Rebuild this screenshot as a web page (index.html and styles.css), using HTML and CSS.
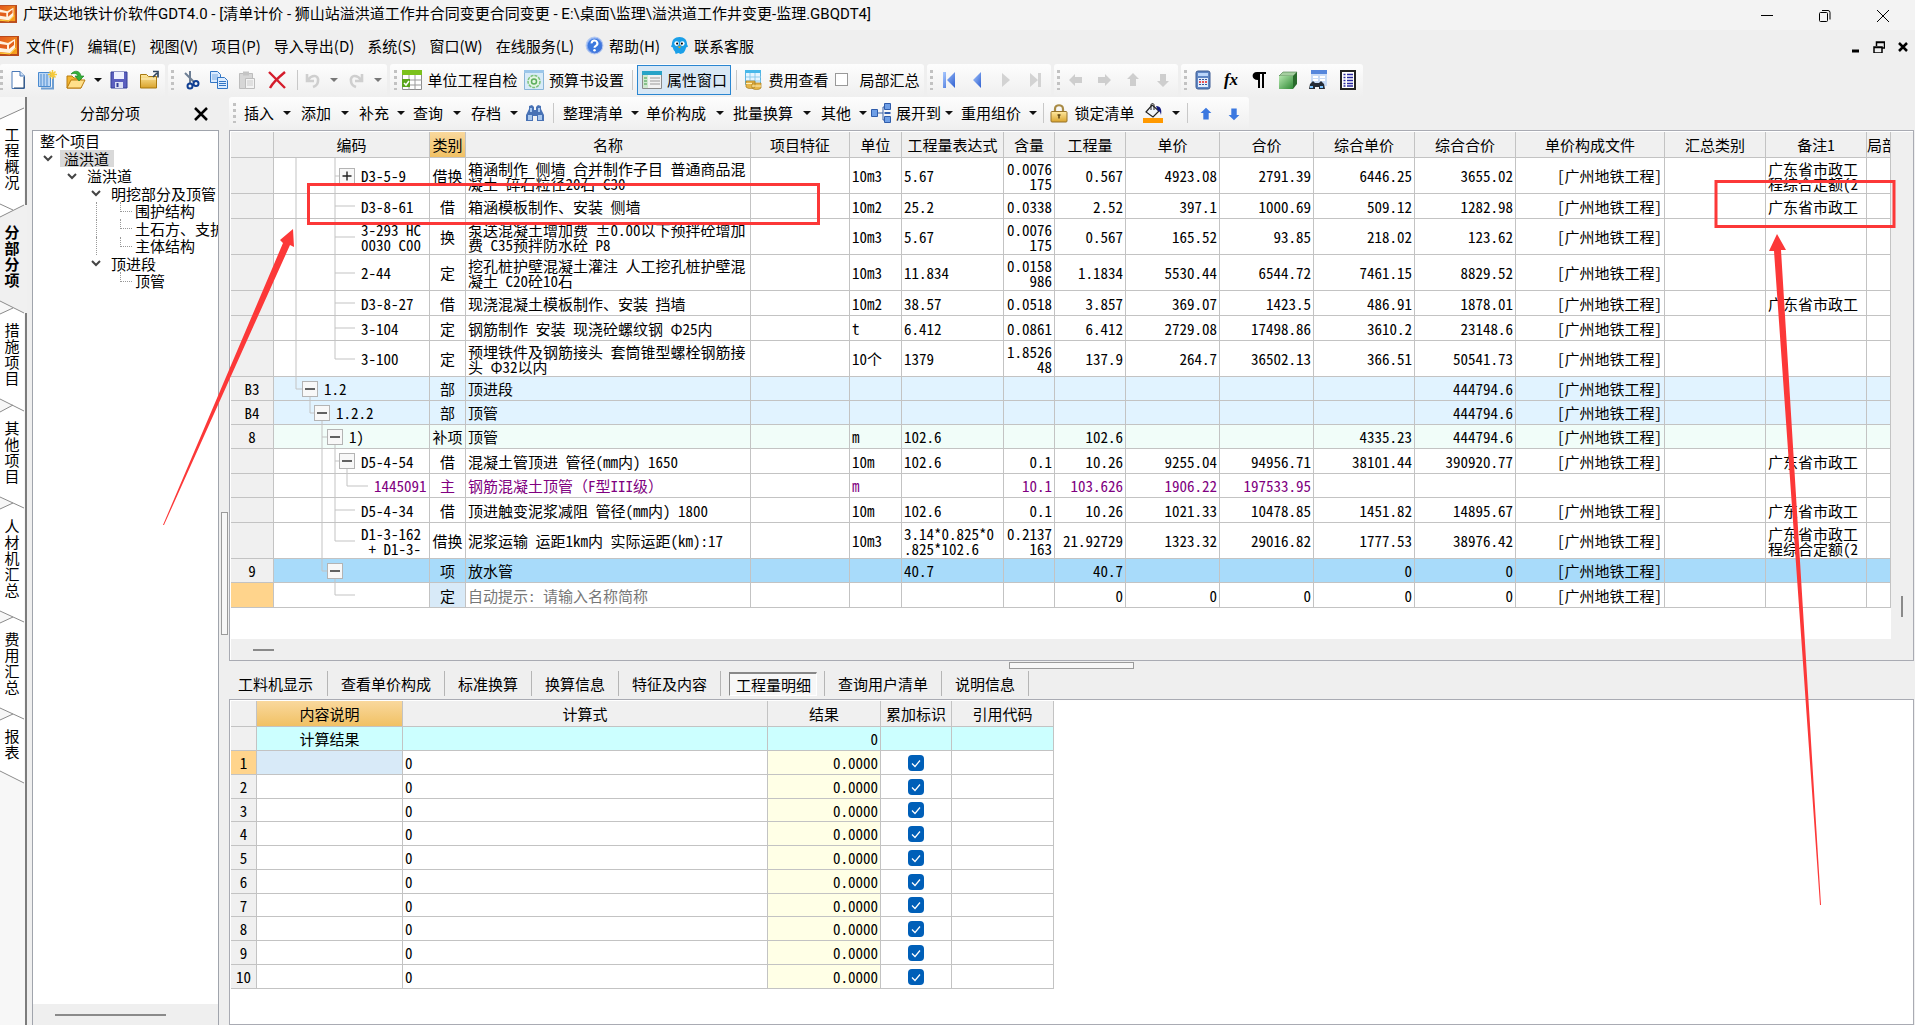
FILE: index.html
```html
<!DOCTYPE html>
<html lang="zh-CN">
<head>
<meta charset="utf-8">
<title>广联达地铁计价软件GDT4.0</title>
<link rel="stylesheet" href="styles.css">
</head>
<body>
<svg class="defs" aria-hidden="true">
  <defs>
    <linearGradient id="g-blue" x1="0" y1="0" x2="1" y2="1"><stop offset="0" stop-color="#a9c9ff"/><stop offset="1" stop-color="#2e5fd0"/></linearGradient>
    <linearGradient id="g-gold" x1="0" y1="0" x2="0" y2="1"><stop offset="0" stop-color="#ffe9a0"/><stop offset="1" stop-color="#d9a32c"/></linearGradient>
    <linearGradient id="g-green" x1="0" y1="0" x2="1" y2="1"><stop offset="0" stop-color="#b4e6ae"/><stop offset="1" stop-color="#2f8a35"/></linearGradient>
    <linearGradient id="g-app" x1="0" y1="0" x2="1" y2="1"><stop offset="0" stop-color="#e2571c"/><stop offset="1" stop-color="#f8a51e"/></linearGradient>
  </defs>
  <symbol id="i-app" viewBox="0 0 19 20"><rect x="0" y="0" width="19" height="20" fill="#b8481a"/><rect x="0" y="1" width="17" height="17" fill="url(#g-app)"/><path d="M0 5l8 2 7-4v9l-5 5-10-1z" fill="#fff3e0"/><path d="M0 8l7 1v4l-7-1zM9 9l5-4v4l-5 4z" fill="#e2601c"/><path d="M0 17l10 1 6-6" stroke="#ffd43b" fill="none"/></symbol>
  <symbol id="i-help" viewBox="0 0 18 18"><circle cx="9" cy="9" r="8" fill="url(#g-blue)" stroke="#b9cdf0"/><circle cx="9" cy="9" r="6.500" fill="#3b78de"/><path d="M6.300 7a2.700 2.700 0 1 1 4 2.300C9.300 9.900 9 10.200 9 11.200" stroke="#fff" stroke-width="2" fill="none"/><circle cx="9" cy="13.500" r="1.200" fill="#fff"/></symbol>
  <symbol id="i-qq" viewBox="0 0 20 20"><path d="M2 9C2 4 5 1 10 1s8 3 8 8l1 2-2 1c-1 4-3 6-3 6l-3 1-2-1-3 1-1-3c-1-1-2-3-2-4l-2-1z" fill="#1a9fe8"/><circle cx="7" cy="8" r="2.400" fill="#fff"/><circle cx="13" cy="8" r="2.400" fill="#fff"/><circle cx="7.500" cy="8" r="1.100"/><circle cx="12.500" cy="8" r="1.100"/><path d="M8 11h4l-2 2z" fill="#f59f00"/></symbol>
  <symbol id="i-new" viewBox="0 0 20 20"><path d="M4 1.500h8l4.500 4.500v12.500H4z" fill="#fff" stroke="#4a7ab8"/><path d="M12 1.500V6h4.500" fill="#cfe0f6" stroke="#4a7ab8"/><path d="M16 7v11H6" stroke="#23456f" fill="none"/></symbol>
  <symbol id="i-newp" viewBox="0 0 20 20"><path d="M1.500 2.500h12v14h-12z" fill="#bcd7f5" stroke="#4a8bd0"/><path d="M4 4v12M7 4v12M10 4v12" stroke="#4a8bd0"/><path d="M4 18.500h12V6" stroke="#6d9dd1" stroke-width="2" fill="none"/><path d="M15.500 0v9M11 4.500h9M12.500 1.500l6 6M18.500 1.500l-6 6" stroke="#f5c93a" stroke-width="1.500"/></symbol>
  <symbol id="i-open" viewBox="0 0 20 20"><path d="M1 18V6h5l2 2h7v10z" fill="#f2b632" stroke="#b97a0c"/><path d="M1 18l4-8h14l-4 8z" fill="#ffe08a" stroke="#b97a0c"/><path d="M5 4c3-4 9-4 10 2h3l-5 5-4-5h3c-1-3-4-3-7-2z" fill="#35b13a" stroke="#167a1b" stroke-width=".6"/></symbol>
  <symbol id="i-save" viewBox="0 0 20 20"><path d="M2 2h16v16H2z" fill="#5a5fbe" stroke="#333e98"/><path d="M5 2h10v7H5z" fill="#eef1ff"/><path d="M6 12h8v6H6z" fill="#dbe0f5"/><path d="M7.500 13h2v4h-2z" fill="#333e98"/></symbol>
  <symbol id="i-folder" viewBox="0 0 20 20"><path d="M1.500 18V4.500h6l2 2h8V18z" fill="url(#g-gold)" stroke="#a8780f"/><path d="M2 9h15" stroke="#fff0c0"/><path d="M14 7l4-4M14 1.500h5v6" stroke="#33475f" stroke-width="1.700" fill="none"/></symbol>
  <symbol id="i-cut" viewBox="0 0 20 20"><path d="M4 3l9 9M9 1l0 12" stroke="#6e7f95" stroke-width="2" fill="none"/><circle cx="9" cy="16" r="2.500" fill="none" stroke="#103f93" stroke-width="2"/><circle cx="15" cy="13.500" r="2.500" fill="none" stroke="#103f93" stroke-width="2"/></symbol>
  <symbol id="i-copy" viewBox="0 0 20 20"><path d="M1.500 1.500h7l3 3v8h-10z" fill="#dcecff" stroke="#3376c4"/><path d="M3 5h6M3 7h6M3 9h6" stroke="#7aaae0"/><path d="M8.500 7.500h7l3 3v8h-10z" fill="#dcecff" stroke="#3376c4"/><path d="M10 11.500h7M10 13.500h7M10 15.500h7" stroke="#3376c4"/></symbol>
  <symbol id="i-paste" viewBox="0 0 20 20"><path d="M2.500 3.500h13v15h-13z" fill="#d6d6d6" stroke="#bdbdbd"/><path d="M6 1.500h6v4H6z" fill="#c4c4c4"/><path d="M8.500 8.500h9v10h-9z" fill="#f3f3f3" stroke="#bdbdbd"/><path d="M10 11h6M10 13h6M10 15h6" stroke="#ccc"/></symbol>
  <symbol id="i-del" viewBox="0 0 20 20"><path d="M2 2l16 16M18 2C12 7 6 12 3 18" stroke="#d41c2c" stroke-width="2.400" fill="none"/></symbol>
  <symbol id="i-undo" viewBox="0 0 20 20"><path d="M4 4v7h7" stroke="#cfcfcf" stroke-width="2.600" fill="none"/><path d="M5 10c4-6 11-5 10 1 0 3-2 5-5 6" stroke="#cfcfcf" stroke-width="2.600" fill="none"/></symbol>
  <symbol id="i-redo" viewBox="0 0 20 20"><path d="M16 4v7H9" stroke="#cfcfcf" stroke-width="2.600" fill="none"/><path d="M15 10C11 4 4 5 5 11c0 3 2 5 5 6" stroke="#cfcfcf" stroke-width="2.600" fill="none"/></symbol>
  <symbol id="i-check" viewBox="0 0 20 20"><path d="M.5.500h19v19H.5z" fill="#fff" stroke="#8d8d8d"/><path d="M0 0h20v5H0z" fill="#7bc11c"/><path d="M7 5v15M13 5v15M0 10h20M0 15h20" stroke="#9b9b9b"/><path d="M0 9h8v8H0z" fill="#5aa51b"/><path d="M2 13l2 2 3-4" stroke="#fff" stroke-width="1.500" fill="none"/></symbol>
  <symbol id="i-gear" viewBox="0 0 20 20"><path d="M.5.500h19v19H.5z" fill="#d8ebf8" stroke="#8ab5d8"/><path d="M0 0h20v3H0z" fill="#9cc7ea"/><circle cx="10" cy="11.500" r="6" fill="#e4f5e4" stroke="#7cc27c" stroke-width="1.500" stroke-dasharray="3 1"/><circle cx="10" cy="11.500" r="2.500" fill="none" stroke="#5cae5c" stroke-width="1.500"/></symbol>
  <symbol id="i-props" viewBox="0 0 20 20"><path d="M.5 1.500h19v17H.5z" fill="#f2f2f2" stroke="#8a8a8a"/><path d="M0 1h20v4H0z" fill="#27a3c7"/><path d="M1 5h5v13H1z" fill="#cfe8cf"/><path d="M2 8h3M2 11h3M2 14h3" stroke="#3f9b46"/><path d="M8 8h10M8 11h10M8 14h10" stroke="#9a9a9a"/></symbol>
  <symbol id="i-fee" viewBox="0 0 20 20"><path d="M2.500.500h15v14h-15z" fill="#e6f5ff" stroke="#5db4e0"/><path d="M2 0h16v3H2z" fill="#48b8ea"/><path d="M7 3v12M12 3v12M3 7h15M3 11h15" stroke="#8ccbec"/><path d="M3 11h9v6c-2 2-7 2-9 0zM9 13h9v5c-2 2-7 2-9 0z" fill="#e6b64a" stroke="#a67c1e" stroke-width=".7"/><path d="M3 13.500h6M9 16h9" stroke="#fff0b8"/></symbol>
  <symbol id="i-prev" viewBox="0 0 20 20"><path d="M14 2v16L6 10z" fill="url(#g-blue)"/></symbol>
  <symbol id="i-first" viewBox="0 0 20 20"><path d="M16 2v16L8 10zM4 2h3v16H4z" fill="url(#g-blue)"/></symbol>
  <symbol id="i-next" viewBox="0 0 20 20"><path d="M6 3v14l8-7z" fill="#d3d3d3"/></symbol>
  <symbol id="i-last" viewBox="0 0 20 20"><path d="M4 3v14l8-7zM12 3h3v14h-3z" fill="#d3d3d3"/></symbol>
  <symbol id="i-arr" viewBox="0 0 20 20"><path d="M10 3l6 6h-3v7H7V9H4z"/></symbol>
  <symbol id="i-calc" viewBox="0 0 20 20"><rect x="3" y="1" width="14" height="18" rx="2" fill="#5f86c4" stroke="#3f5d93"/><path d="M5 3h10v3H5z" fill="#bcd6fa"/><path d="M5 8h10v9H5z" fill="#e4eefc"/><path d="M6 9h2v1H6zM9 9h2v1H9zM12 9h2v1h-2zM6 14h2v1H6zM9 14h2v1H9zM12 14h2v1h-2z" fill="#35569a"/><path d="M6 11h2v2H6zM9 11h2v2H9zM12 11h2v2h-2z" fill="#e55"/></symbol>
  <symbol id="i-para" viewBox="0 0 20 20"><path d="M8 2h9v2h-2v14h-2V4h-2v14H9v-8C2 10 2 2 8 2z"/></symbol>
  <symbol id="i-cube" viewBox="0 0 20 20"><path d="M1 6l4-4h14l-3 4z" fill="#a5cfa0" stroke="#437a43" stroke-width=".6"/><path d="M1 6h14v13H1z" fill="url(#g-green)"/><path d="M15 6l4-4v12l-4 5z" fill="#296b2c"/></symbol>
  <symbol id="i-find" viewBox="0 0 20 20"><path d="M3 0h16v16H3z" fill="#c9dcf6"/><path d="M3 0h16v4H3z" fill="#5587dc"/><path d="M5 6h5v2H5zM12 6h5v2h-5zM5 9h5v2H5zM12 9h5v2h-5z" fill="#fff"/><path d="M1 19l1-5 3-3 2 2h4l2-2 3 3 1 5h-6v-2H7v2z" fill="#252c36"/><path d="M2 16h3v2H2zM12 16h3v2h-3z" fill="#7bc4ff"/></symbol>
  <symbol id="i-list" viewBox="0 0 20 20"><path d="M3 1h14v18H3z" fill="#fff" stroke="#222" stroke-width="2"/><path d="M5.500 4.500h2M5.500 7.500h2M5.500 10.500h2M5.500 13.500h2M5.500 16h2M9 4.500h6M9 7.500h6M9 10.500h6M9 13.500h6M9 16h6" stroke="#2a2aa0" stroke-width="1.600"/></symbol>
  <symbol id="i-bino" viewBox="0 0 20 20"><path d="M1 18V12l3-6V3l3-1 2 2v3h2V4l2-2 3 1v3l3 6v6h-7v-5H8v5z" fill="#4872b5"/><path d="M3 12h4v5H3zM13 12h4v5h-4zM5 5h2v4H5zM13 5h2v4h-2z" fill="#a9c8ee"/></symbol>
  <symbol id="i-tree" viewBox="0 0 20 20"><path d="M7 10h5M12 4v13M12 4h2M12 17h2" stroke="#3a62a8" fill="none"/><path d="M.5 6.500h6v7h-6zM13.500.500h6v6h-6zM13.500 13.500h6v6h-6z" fill="#6f9fe6" stroke="#2f5cab"/><path d="M13.500 9h6v2h-6z" fill="#2f5cab"/></symbol>
  <symbol id="i-lock" viewBox="0 0 20 20"><path d="M6 9V6c0-5 8-5 8 0v3" fill="none" stroke="#a98b45" stroke-width="2.200"/><rect x="2" y="8.500" width="16" height="10.500" rx="1" fill="url(#g-gold)" stroke="#96722a"/><path d="M10 11.500v4M8.500 12h3" stroke="#5b4312" stroke-width="1.500"/></symbol>
  <symbol id="i-fill" viewBox="0 0 20 20"><path d="M0 15h20v5H0z" fill="#ff9900"/><path d="M9 2l7 6-6 6-7-5z" fill="#f1f5fa" stroke="#222" stroke-width="1.200"/><path d="M8 7V2c0-2 3-2 3 0v5" fill="none" stroke="#222"/><path d="M13 3c5 0 6 4 5 9-1-4-2-4-3-4z" fill="#141c80"/></symbol>
  <symbol id="i-chev" viewBox="0 0 10 8"><path d="M1 2l4 4 4-4" fill="none" stroke="#444" stroke-width="2"/></symbol>
  <symbol id="b-minus" viewBox="0 0 16 16"><rect x=".5" y=".5" width="15" height="15" fill="#f8f8f8" stroke="#b4b4b4"/><path d="M3 8h10" stroke="#222" stroke-width="1.400"/></symbol>
  <symbol id="b-plus" viewBox="0 0 16 16"><rect x=".5" y=".5" width="15" height="15" fill="#f8f8f8" stroke="#b4b4b4"/><path d="M3.500 8h9M8 3.500v9" stroke="#222" stroke-width="1.400"/></symbol>
</svg>

<header class="titlebar">
  <svg class="app"><use href="#i-app"/></svg>
  <h1>广联达地铁计价软件GDT4.0 - [清单计价 - 狮山站溢洪道工作井合同变更合同变更 - E:\桌面\监理\溢洪道工作井变更-监理.GBQDT4]</h1>
  <div class="winbtns">
    <button aria-label="最小化"><svg viewBox="0 0 14 14"><path d="M1 6.500h12" stroke="#000"/></svg></button>
    <button aria-label="还原"><svg viewBox="0 0 14 14"><path d="M1.500 4.500q0-1 1-1h6q1 0 1 1v7q0 1-1 1h-6q-1 0-1-1zM4 1.500h6q2 0 2 2v7" fill="none" stroke="#000"/></svg></button>
    <button aria-label="关闭"><svg viewBox="0 0 14 14"><path d="M1 1l12 12M13 1L1 13" stroke="#000"/></svg></button>
  </div>
</header>

<nav class="menubar" aria-label="菜单">
  <svg class="app"><use href="#i-app"/></svg>
  <button>文件(F)</button><button>编辑(E)</button><button>视图(V)</button><button>项目(P)</button><button>导入导出(D)</button><button>系统(S)</button><button>窗口(W)</button><button>在线服务(L)</button>
  <button class="pic"><svg class="mi"><use href="#i-help"/></svg>帮助(H)</button>
  <button class="pic"><svg class="mi"><use href="#i-qq"/></svg>联系客服</button>
  <div class="mdi">
    <button aria-label="子窗口最小化"><svg viewBox="0 0 12 12"><path d="M3 10h7" stroke="#000" stroke-width="3"/></svg></button>
    <button aria-label="子窗口还原"><svg viewBox="0 0 12 12"><path d="M1 6h8v6H1zM3.500 5V1h8v6H9M1 6.500h8M3 1.500h9" fill="none" stroke="#000" stroke-width="1.500"/></svg></button>
    <button aria-label="子窗口关闭"><svg viewBox="0 0 12 12"><path d="M2 2l8 8M10 2l-8 8" stroke="#000" stroke-width="2.500"/></svg></button>
  </div>
</nav>

<div class="toolbars">
  <div class="bar file" role="toolbar" aria-label="文件">
    <span class="grip"></span>
    <button aria-label="新建"><svg><use href="#i-new"/></svg></button><button aria-label="新建项目"><svg><use href="#i-newp"/></svg></button><button aria-label="打开"><svg><use href="#i-open"/></svg></button><button class="caret" aria-label="打开列表"></button><button aria-label="保存"><svg><use href="#i-save"/></svg></button><button aria-label="目录"><svg><use href="#i-folder"/></svg></button>
  </div>
  <div class="bar edit" role="toolbar" aria-label="编辑">
    <span class="grip"></span>
    <button aria-label="剪切"><svg><use href="#i-cut"/></svg></button><button aria-label="复制"><svg><use href="#i-copy"/></svg></button><button aria-label="粘贴"><svg><use href="#i-paste"/></svg></button><button aria-label="删除"><svg><use href="#i-del"/></svg></button><span class="sep"></span><button aria-label="撤销"><svg><use href="#i-undo"/></svg></button><button class="caret dim" aria-label="撤销列表"></button><button aria-label="重做"><svg><use href="#i-redo"/></svg></button><button class="caret dim" aria-label="重做列表"></button>
  </div>
  <div class="bar view" role="toolbar" aria-label="查看">
    <span class="grip"></span>
    <button class="lbl"><svg><use href="#i-check"/></svg>单位工程自检</button><button class="lbl"><svg><use href="#i-gear"/></svg>预算书设置</button><span class="sep"></span><button class="lbl on"><svg><use href="#i-props"/></svg>属性窗口</button><span class="sep"></span><button class="lbl"><svg><use href="#i-fee"/></svg>费用查看</button><label class="lbl"><input type="checkbox" class="plain">局部汇总</label>
  </div>
  <div class="bar nav4" role="toolbar" aria-label="记录">
    <span class="grip"></span>
    <button aria-label="首条"><svg><use href="#i-first"/></svg></button><button aria-label="上一条"><svg><use href="#i-prev"/></svg></button><button aria-label="下一条"><svg><use href="#i-next"/></svg></button><button aria-label="末条"><svg><use href="#i-last"/></svg></button>
  </div>
  <div class="bar nav4 grey" role="toolbar" aria-label="移动">
    <span class="grip"></span>
    <button aria-label="左移"><svg class="lf"><use href="#i-arr"/></svg></button><button aria-label="右移"><svg class="rt"><use href="#i-arr"/></svg></button><button aria-label="上移"><svg><use href="#i-arr"/></svg></button><button aria-label="下移"><svg class="dn"><use href="#i-arr"/></svg></button>
  </div>
  <div class="bar tools" role="toolbar" aria-label="工具">
    <span class="grip"></span>
    <button aria-label="计算器"><svg><use href="#i-calc"/></svg></button><button class="fx">fx</button><button aria-label="段落"><svg><use href="#i-para"/></svg></button><button aria-label="图元"><svg><use href="#i-cube"/></svg></button><button aria-label="查找表"><svg><use href="#i-find"/></svg></button><button aria-label="清单"><svg><use href="#i-list"/></svg></button>
  </div>
</div>

<div class="body">
  <nav class="vtabs" aria-label="页面">
    <svg class="shape" viewBox="0 0 27 720" aria-hidden="true">
      <path d="M0 22L24 11V108L0 120ZM0 217L13 211L24 216V314L0 302ZM0 315L13 308L24 314V411L0 400ZM0 412L13 406L24 411V525L0 514ZM0 526L13 520L24 525V622L0 611ZM0 623L13 617L24 622V686L0 674Z" fill="#fff"/>
      <path d="M0 120L24 108H27V216H24L0 204Z" fill="#f0f0f0"/>
      <path d="M0 22L24 11M0 107L13 113M0 120L24 108M0 204L24 216M0 217L13 211M0 302L24 314M0 315L13 308M0 400L24 411M0 412L13 406M0 514L24 525M0 526L13 520M0 611L24 622M0 623L13 617M0 674L24 686" fill="none" stroke="#8a8a8a"/>
    </svg>
    <button class="t4">工程概况</button><button class="t4 on">分部分项</button><button class="t4">措施项目</button><button class="t4">其他项目</button><button class="t5">人材机汇总</button><button class="t4">费用汇总</button><button class="t2">报表</button>
  </nav>

  <aside class="side">
    <div class="sidehead"><h2>分部分项</h2><button aria-label="关闭面板"><svg viewBox="0 0 14 14"><path d="M1 1l12 12M13 1L1 13" stroke="#000" stroke-width="2.500"/></svg></button></div>
    <div class="treebox">
      <ul class="tree">
        <li>整个项目</li>
        <li class="d1"><svg><use href="#i-chev"/></svg><span class="cur">溢洪道</span></li>
        <li class="d2"><svg><use href="#i-chev"/></svg>溢洪道</li>
        <li class="d3"><svg><use href="#i-chev"/></svg>明挖部分及顶管</li>
        <li class="d4 pass">围护结构</li>
        <li class="d4 pass">土石方、支护</li>
        <li class="d4 pass">主体结构</li>
        <li class="d3"><svg><use href="#i-chev"/></svg>顶进段</li>
        <li class="d4">顶管</li>
      </ul>
      <div class="hscroll"><span class="thumb wide"></span></div>
    </div>
  </aside>
  <div class="vsplit"><span></span></div>

  <main>
    <div class="bar list" role="toolbar" aria-label="清单操作">
      <span class="grip"></span>
      <button>插入</button><button class="caret" aria-label="插入列表"></button><button>添加</button><button class="caret" aria-label="添加列表"></button><button>补充</button><button class="caret" aria-label="补充列表"></button><button>查询</button><button class="caret" aria-label="查询列表"></button><button>存档</button><button class="caret" aria-label="存档列表"></button><button aria-label="查找"><svg><use href="#i-bino"/></svg></button><span class="sep"></span>
      <button>整理清单</button><button class="caret" aria-label="整理列表"></button><button>单价构成</button><button class="caret" aria-label="单价列表"></button><button>批量换算</button><button class="caret" aria-label="换算列表"></button><button>其他</button><button class="caret" aria-label="其他列表"></button><button class="lbl"><svg><use href="#i-tree"/></svg>展开到</button><button class="caret" aria-label="展开列表"></button><button>重用组价</button><button class="caret" aria-label="重用列表"></button><span class="sep"></span>
      <button class="lbl"><svg><use href="#i-lock"/></svg>锁定清单</button><button aria-label="填充颜色"><svg><use href="#i-fill"/></svg></button><button class="caret" aria-label="颜色列表"></button><span class="sep"></span><button aria-label="上移行" class="blue"><svg><use href="#i-arr"/></svg></button><button aria-label="下移行" class="blue"><svg class="dn"><use href="#i-arr"/></svg></button>
    </div>

    <section class="upper">
      <div class="gridwrap">
      <table class="grid">
        <colgroup><col class="c0"><col class="c1"><col class="c2"><col class="c3"><col class="c4"><col class="c5"><col class="c6"><col class="c7"><col class="c8"><col class="c9"><col class="c9"><col class="c10"><col class="c10"><col class="c11"><col class="c10"><col class="c10"><col></colgroup>
        <thead><tr><th></th><th>编码</th><th class="hot">类别</th><th>名称</th><th>项目特征</th><th>单位</th><th>工程量表达式</th><th>含量</th><th>工程量</th><th>单价</th><th>合价</th><th>综合单价</th><th>综合合价</th><th>单价构成文件</th><th>汇总类别</th><th>备注1</th><th class="cutoff">局部</th></tr></thead>
        <tbody>
        <tr class="r36"><th></th><td class="k k4"><svg class="ln"><path d="M22 0V36M61 0V36M61 18H66"/><use href="#b-plus" x="65" y="10" width="16" height="16"/></svg>D3-5-9</td><td>借换</td><td>箱涵制作 侧墙 合并制作子目 普通商品混凝土 碎石粒径20石 C30</td><td></td><td>10m3</td><td>5.67</td><td>0.0076<br>175</td><td>0.567</td><td>4923.08</td><td>2791.39</td><td>6446.25</td><td>3655.02</td><td>[广州地铁工程]</td><td></td><td>广东省市政工程综合定额(2</td><td></td></tr>
        <tr class="r25"><th></th><td class="k k4"><svg class="ln"><path d="M22 0V25M61 0V25M61 12H81"/></svg>D3-8-61</td><td>借</td><td>箱涵模板制作、安装 侧墙</td><td></td><td>10m2</td><td>25.2</td><td>0.0338</td><td>2.52</td><td>397.1</td><td>1000.69</td><td>509.12</td><td>1282.98</td><td>[广州地铁工程]</td><td></td><td>广东省市政工</td><td></td></tr>
        <tr class="r36"><th></th><td class="k k4"><svg class="ln"><path d="M22 0V36M61 0V36M61 18H81"/></svg>3-293 HC<br>0030 C00</td><td>换</td><td>泵送混凝土增加费 ±0.00以下预拌砼增加费 C35预拌防水砼 P8</td><td></td><td>10m3</td><td>5.67</td><td>0.0076<br>175</td><td>0.567</td><td>165.52</td><td>93.85</td><td>218.02</td><td>123.62</td><td>[广州地铁工程]</td><td></td><td></td><td></td></tr>
        <tr class="r36"><th></th><td class="k k4"><svg class="ln"><path d="M22 0V36M61 0V36M61 18H81"/></svg>2-44</td><td>定</td><td>挖孔桩护壁混凝土灌注 人工挖孔桩护壁混凝土 C20砼10石</td><td></td><td>10m3</td><td>11.834</td><td>0.0158<br>986</td><td>1.1834</td><td>5530.44</td><td>6544.72</td><td>7461.15</td><td>8829.52</td><td>[广州地铁工程]</td><td></td><td></td><td></td></tr>
        <tr class="r25"><th></th><td class="k k4"><svg class="ln"><path d="M22 0V25M61 0V25M61 12H81"/></svg>D3-8-27</td><td>借</td><td>现浇混凝土模板制作、安装 挡墙</td><td></td><td>10m2</td><td>38.57</td><td>0.0518</td><td>3.857</td><td>369.07</td><td>1423.5</td><td>486.91</td><td>1878.01</td><td>[广州地铁工程]</td><td></td><td>广东省市政工</td><td></td></tr>
        <tr class="r25"><th></th><td class="k k4"><svg class="ln"><path d="M22 0V25M61 0V25M61 12H81"/></svg>3-104</td><td>定</td><td>钢筋制作 安装 现浇砼螺纹钢 Φ25内</td><td></td><td>t</td><td>6.412</td><td>0.0861</td><td>6.412</td><td>2729.08</td><td>17498.86</td><td>3610.2</td><td>23148.6</td><td>[广州地铁工程]</td><td></td><td></td><td></td></tr>
        <tr class="r36"><th></th><td class="k k4"><svg class="ln"><path d="M22 0V36M61 0V18H81"/></svg>3-100</td><td>定</td><td>预埋铁件及钢筋接头 套筒锥型螺栓钢筋接头 Φ32以内</td><td></td><td>10个</td><td>1379</td><td>1.8526<br>48</td><td>137.9</td><td>264.7</td><td>36502.13</td><td>366.51</td><td>50541.73</td><td>[广州地铁工程]</td><td></td><td></td><td></td></tr>
        <tr class="r24 part"><th>B3</th><td class="k k1"><svg class="ln"><path d="M22 0V12H28M36 20V24"/><use href="#b-minus" x="28" y="4" width="16" height="16"/></svg>1.2</td><td>部</td><td>顶进段</td><td></td><td></td><td></td><td></td><td></td><td></td><td></td><td></td><td>444794.6</td><td>[广州地铁工程]</td><td></td><td></td><td></td></tr>
        <tr class="r24 part"><th>B4</th><td class="k k2"><svg class="ln"><path d="M36 0V12H41M48 20V24"/><use href="#b-minus" x="40" y="4" width="16" height="16"/></svg>1.2.2</td><td>部</td><td>顶管</td><td></td><td></td><td></td><td></td><td></td><td></td><td></td><td></td><td>444794.6</td><td>[广州地铁工程]</td><td></td><td></td><td></td></tr>
        <tr class="r24 item"><th>8</th><td class="k k3"><svg class="ln"><path d="M48 0V24M48 12H53M61 20V24"/><use href="#b-minus" x="53" y="4" width="16" height="16"/></svg>1)</td><td>补项</td><td>顶管</td><td></td><td>m</td><td>102.6</td><td></td><td>102.6</td><td></td><td></td><td>4335.23</td><td>444794.6</td><td>[广州地铁工程]</td><td></td><td></td><td></td></tr>
        <tr class="r25"><th></th><td class="k k4"><svg class="ln"><path d="M48 0V25M61 0V25M61 12H65M73 20V25"/><use href="#b-minus" x="65" y="4" width="16" height="16"/></svg>D5-4-54</td><td>借</td><td>混凝土管顶进 管径(mm内) 1650</td><td></td><td>10m</td><td>102.6</td><td>0.1</td><td>10.26</td><td>9255.04</td><td>94956.71</td><td>38101.44</td><td>390920.77</td><td>[广州地铁工程]</td><td></td><td>广东省市政工</td><td></td></tr>
        <tr class="r24 main"><th></th><td class="k k5"><svg class="ln"><path d="M48 0V24M61 0V24M73 0V12H94"/></svg>1445091</td><td>主</td><td>钢筋混凝土顶管（F型III级）</td><td></td><td>m</td><td></td><td>10.1</td><td>103.626</td><td>1906.22</td><td>197533.95</td><td></td><td></td><td></td><td></td><td></td><td></td></tr>
        <tr class="r25"><th></th><td class="k k4"><svg class="ln"><path d="M48 0V25M61 0V25M61 12H81"/></svg>D5-4-34</td><td>借</td><td>顶进触变泥浆减阻 管径(mm内) 1800</td><td></td><td>10m</td><td>102.6</td><td>0.1</td><td>10.26</td><td>1021.33</td><td>10478.85</td><td>1451.82</td><td>14895.67</td><td>[广州地铁工程]</td><td></td><td>广东省市政工</td><td></td></tr>
        <tr class="r36"><th></th><td class="k k4"><svg class="ln"><path d="M48 0V36M61 0V18H81"/></svg>D1-3-162<br>&nbsp;+ D1-3-</td><td>借换</td><td>泥浆运输 运距1km内 实际运距(km):17</td><td></td><td>10m3</td><td>3.14*0.825*0<br>.825*102.6</td><td>0.2137<br>163</td><td>21.92729</td><td>1323.32</td><td>29016.82</td><td>1777.53</td><td>38976.42</td><td>[广州地铁工程]</td><td></td><td>广东省市政工程综合定额(2</td><td></td></tr>
        <tr class="r24 sel"><th>9</th><td class="k k3"><svg class="ln"><path d="M48 0V12H53M61 20V24"/><use href="#b-minus" x="53" y="4" width="16" height="16"/></svg></td><td>项</td><td>放水管</td><td></td><td></td><td>40.7</td><td></td><td>40.7</td><td></td><td></td><td>0</td><td>0</td><td>[广州地铁工程]</td><td></td><td></td><td></td></tr>
        <tr class="r25"><th class="now"></th><td class="k k4"><svg class="ln"><path d="M61 0V12H81"/></svg></td><td class="pick">定</td><td><input class="hint" aria-label="名称" placeholder="自动提示: 请输入名称简称"></td><td></td><td></td><td></td><td></td><td>0</td><td>0</td><td>0</td><td>0</td><td>0</td><td>[广州地铁工程]</td><td></td><td></td><td></td></tr>
        </tbody>
      </table>
      <div class="vscroll"><span class="thumb"></span></div>
      </div>
      <div class="hscroll"><span class="thumb"></span></div>
    </section>

    <div class="hsplit"><span></span></div>

    <div class="tabs" role="tablist">
      <button role="tab">工料机显示</button><button role="tab">查看单价构成</button><button role="tab">标准换算</button><button role="tab">换算信息</button><button role="tab">特征及内容</button><button role="tab" class="on" aria-selected="true"><span>工程量明细</span></button><button role="tab">查询用户清单</button><button role="tab">说明信息</button>
    </div>

    <section class="lower">
      <table class="grid calc">
        <colgroup><col class="n0"><col class="n1"><col class="n2"><col class="n3"><col class="n4"><col class="n5"></colgroup>
        <thead><tr><th></th><th class="hot">内容说明</th><th>计算式</th><th>结果</th><th>累加标识</th><th>引用代码</th></tr></thead>
        <tbody>
        <tr class="sum"><th></th><td>计算结果</td><td></td><td>0</td><td></td><td></td></tr>
        <tr><th class="now">1</th><td class="pick"></td><td>0</td><td>0.0000</td><td><input type="checkbox" aria-label="累加1" checked></td><td></td></tr>
        <tr><th>2</th><td></td><td>0</td><td>0.0000</td><td><input type="checkbox" aria-label="累加2" checked></td><td></td></tr>
        <tr><th>3</th><td></td><td>0</td><td>0.0000</td><td><input type="checkbox" aria-label="累加3" checked></td><td></td></tr>
        <tr><th>4</th><td></td><td>0</td><td>0.0000</td><td><input type="checkbox" aria-label="累加4" checked></td><td></td></tr>
        <tr><th>5</th><td></td><td>0</td><td>0.0000</td><td><input type="checkbox" aria-label="累加5" checked></td><td></td></tr>
        <tr><th>6</th><td></td><td>0</td><td>0.0000</td><td><input type="checkbox" aria-label="累加6" checked></td><td></td></tr>
        <tr><th>7</th><td></td><td>0</td><td>0.0000</td><td><input type="checkbox" aria-label="累加7" checked></td><td></td></tr>
        <tr><th>8</th><td></td><td>0</td><td>0.0000</td><td><input type="checkbox" aria-label="累加8" checked></td><td></td></tr>
        <tr><th>9</th><td></td><td>0</td><td>0.0000</td><td><input type="checkbox" aria-label="累加9" checked></td><td></td></tr>
        <tr><th>10</th><td></td><td>0</td><td>0.0000</td><td><input type="checkbox" aria-label="累加10" checked></td><td></td></tr>
        </tbody>
      </table>
    </section>
  </main>
</div>

<svg class="marks" width="1915" height="1025" aria-hidden="true">
  <rect x="308.500" y="184.500" width="510" height="39"/><rect x="1716" y="181.500" width="178" height="45"/>
  <path d="M163 525L283 243L280 240L293 229L294 247L290 245L164 525ZM1820 905L1774 251H1769L1777 234L1786 250H1781L1821 905Z"/>
</svg>
</body>
</html>
```
FILE: styles.css
```css
* { box-sizing: border-box; }
body {
  margin: 0;
  height: 100vh;
  overflow: hidden;
  position: relative;
  display: flex;
  flex-direction: column;
  background: #efefef;
  color: #000;
  font: 15px/20px "Noto Sans CJK SC", sans-serif;
}
button {
  margin: 0;
  padding: 0;
  border: 0;
  background: none;
  color: inherit;
  font: inherit;
  white-space: nowrap;
}
h1, h2 { margin: 0; font: inherit; white-space: nowrap; }
.defs { position: absolute; width: 0; height: 0; }
.app { width: 19px; height: 20px; flex: none; }

/* title and menu */
.titlebar { display: flex; align-items: center; height: 30px; flex: none; padding-bottom: 2px; background: #f3f3f3; }
.titlebar .app { width: 17px; }
.titlebar h1 { margin-left: 6px; flex: 1; font-family: Roboto, "Noto Sans CJK SC", sans-serif; }
.winbtns { display: flex; padding-right: 3px; }
.winbtns button { width: 58px; height: 28px; }
.winbtns svg { width: 14px; height: 14px; vertical-align: middle; }
.menubar { display: flex; align-items: center; gap: 1px; height: 34px; flex: none; padding-bottom: 3px; }
.menubar > button { display: flex; align-items: center; gap: 5px; padding: 0 6px; }
.menubar > .pic { padding: 0 5px 0 4px; }
.mi { width: 19px; height: 19px; }
.mdi { margin-left: auto; display: flex; gap: 12px; padding-right: 6px; }
.mdi svg { width: 12px; height: 12px; vertical-align: middle; }

/* toolbars */
.toolbars { display: flex; gap: 3px; height: 33px; flex: none; }
.bar {
  display: grid;
  align-items: center;
  justify-items: center;
  height: 33px;
  padding-bottom: 2px;
  border-radius: 3px;
  background: linear-gradient(#fdfdfd, #efefef);
}
.bar svg { width: 20px; height: 20px; vertical-align: middle; flex: none; }
.bar .lbl { display: flex; align-items: center; gap: 5px; }
.grip { width: 3px; height: 20px; background: repeating-linear-gradient(#c2c2c2 0 3px, transparent 3px 6px); }
.sep { width: 1px; height: 20px; background: #c8c8c8; }
.caret { width: 14px; height: 20px; display: grid; place-items: center; }
.caret::before { content: ""; border: 4px solid transparent; border-top-color: #111; border-bottom: 0; }
.caret.dim::before { border-top-color: #777; }
.file { grid-template-columns: 3px 30px 28px 30px 14px 28px 32px; }
.edit { grid-template-columns: 8px 30px 26px 30px 30px 10px 22px 20px 24px 19px; }
.view { grid-template-columns: 10px 120px 108px 9px 94px 10px 90px 93px; }
.nav4 { grid-template-columns: 8px 28px 28px 30px 30px; }
.tools { grid-template-columns: 8px 28px 28px 28px 30px 30px 30px; }
.on.lbl { height: 30px; width: 94px; padding-left: 4px; border: 1px solid #2a86d1; background: #d9e8f5; }
.plain { appearance: none; width: 13px; height: 13px; margin: 0 6px 0 0; border: 1px solid #999; background: #fff; }
.grey svg { fill: #cecece; }
.blue svg { fill: #3b78e0; width: 18px; height: 18px; }
.lf { transform: rotate(-90deg); }
.rt { transform: rotate(90deg); }
.dn { transform: rotate(180deg); }
.fx { font: italic bold 17px/20px "Liberation Serif", serif; }
.list {
  width: 1020px;
  grid-template-columns: 10px 40px 16px 42px 16px 42px 12px 42px 16px 42px 14px 28px 8px 72px 11px 72px 15px 72px 16px 42px 12px 74px 12px 72px 11px 10px 88px 34px 12px 10px 28px 28px;
}

/* body */
.body { flex: 1; min-height: 0; display: flex; }
.vtabs {
  position: relative;
  width: 27px;
  flex: none;
  display: flex;
  flex-direction: column;
  padding-top: 12px;
  border-right: 2px solid #7c7c7c;
  background: #f7f7f7;
}
.shape { position: absolute; left: 0; top: 0; width: 27px; height: 720px; }
.vtabs button {
  position: relative;
  width: 24px;
  padding: 0 4px;
  white-space: normal;
  word-break: break-all;
  line-height: 16px;
}
.vtabs .on { font-weight: bold; }
.t4 { height: 98px; }
.t5 { height: 113px; }
.t2 { height: 64px; }

.side { width: 192px; flex: none; display: flex; flex-direction: column; padding-left: 5px; }
.sidehead { height: 33px; flex: none; display: flex; align-items: center; justify-content: space-between; padding: 0 11px 2px 48px; }
.sidehead svg { width: 14px; height: 14px; vertical-align: middle; }
.treebox { flex: 1; border: 1px solid #a0a4ac; border-width: 1px 1px 0; background: #fff; overflow: hidden; display: flex; flex-direction: column; }
.tree { margin: 1px 0 0; padding: 0 0 0 7px; list-style: none; flex: 1; display: grid; grid-auto-rows: 17px 18px; align-content: start; }
.tree li { position: relative; line-height: 17px; white-space: nowrap; display: flex; align-items: center; }
.tree svg { width: 10px; height: 8px; margin-right: 10px; flex: none; }
.tree .d1 svg { margin-right: 7px; }
.d1 { padding-left: 3px; }
.d2 { padding-left: 27px; }
.d3 { padding-left: 51px; }
.tree .d4 { padding-left: 95px; }
.cur { background: #d9d9d9; padding: 0 5px 0 4px; }
.d4::before { content: ""; position: absolute; left: 80px; top: 0; width: 11px; height: 9px; border: dotted #999; border-width: 0 0 1px 1px; }
.pass::after { content: ""; position: absolute; left: 56px; top: 0; height: 18px; border-left: 1px dotted #999; }
.hscroll { height: 21px; flex: none; background: #efefef; display: flex; align-items: center; padding-left: 22px; }
.thumb { width: 21px; height: 2px; background: #8a8a8a; }
.thumb.wide { width: 111px; }
.vsplit { width: 10px; flex: none; display: flex; align-items: center; justify-content: center; padding-top: 25px; }
.vsplit span { width: 7px; height: 123px; border: 1px solid #9a9a9a; background: #f7f7f7; }

main { flex: 1; min-width: 0; display: flex; flex-direction: column; padding-right: 1px; }
.bar.list { flex: none; }
.upper, .lower { border: 1px solid #a9abb3; background: #fff; padding: 1px 0 0 1px; }
.upper { height: 531px; flex: none; display: flex; flex-direction: column; }
.gridwrap { flex: 1; display: flex; align-items: stretch; }
.gridwrap .grid { flex: 1; align-self: flex-start; }
.vscroll { width: 22px; background: #efefef; display: flex; align-items: flex-end; justify-content: center; padding-bottom: 22px; }
.vscroll .thumb { width: 2px; height: 21px; }

/* grids */
.grid {
  width: 100%;
  table-layout: fixed;
  border-collapse: separate;
  border-spacing: 0;
  font: 15px/15px "Noto Sans Mono CJK SC", "Noto Sans CJK SC", monospace;
}
.grid th, .grid td {
  padding: 0 2px;
  border: solid #c3c3c3;
  border-width: 0 1px 1px 0;
  text-align: left;
  font-weight: normal;
  overflow: hidden;
  word-break: break-all;
}
.grid th { background: #f0f0f0; text-align: center; }
.grid thead th { height: 26px; padding: 0; white-space: nowrap; }
.grid thead .hot { background: linear-gradient(#f9d89d, #f1c164); }
.grid .now { background: #ffd48c; }
.grid .pick { background: #d8eaf8; }
.cutoff { text-overflow: clip; }
.c0 { width: 43px; } .c1 { width: 156px; } .c2 { width: 36px; } .c3 { width: 285px; }
.c4 { width: 99px; } .c5 { width: 52px; } .c6 { width: 102px; } .c7 { width: 51px; }
.c8 { width: 71px; } .c9 { width: 94px; } .c10 { width: 101px; } .c11 { width: 149px; }
.r36 { height: 36px; } .r25 { height: 25px; } .r24 { height: 24px; }
.grid td:nth-child(3) { text-align: center; padding: 0; }
.grid td:nth-child(n+8):nth-child(-n+14) { text-align: right; }
.grid td.k { position: relative; white-space: nowrap; }
.grid td.k1 { padding-left: 50px; }
.grid td.k2 { padding-left: 62px; }
.grid td.k3 { padding-left: 75px; }
.grid td.k4 { padding-left: 87px; }
.grid td.k5 { padding-left: 100px; }
.ln { position: absolute; left: 0; top: 0; width: 100px; height: 100%; overflow: visible; fill: none; stroke: #c3c3c3; }
.part td { background: #e1f3ff; }
.item td { background: #f1fdf9; }
.sel td { background: #a8dbfa; }
.main td { color: #800080; }
.hint { display: block; width: 100%; height: 18px; padding: 0; border: 0; background: none; font: inherit; }
.hint::placeholder { color: #777; opacity: 1; }

.hsplit { height: 9px; flex: none; display: flex; align-items: center; justify-content: center; }
.hsplit span { width: 125px; height: 7px; border: 1px solid #9a9a9a; background: #f7f7f7; }
.tabs { display: flex; height: 29px; flex: none; align-items: flex-start; padding-top: 1px; }
.tabs button { height: 25px; padding: 0 13px; border-right: 1px solid #b5b5b5; }
.tabs button:first-child { padding: 0 14px 0 9px; }
.tabs .on { padding: 0 7px 0 8px; }
.tabs .on span { display: block; padding: 1px 5px 0 6px; height: 24px; border: 1px solid #fff; border-top: 2px solid #888; border-left: 1px solid #888; background: #f7f7f7; }
.lower { flex: 1; min-height: 0; }
.grid.calc { width: 823px; }
.n0 { width: 26px; } .n1 { width: 146px; } .n2 { width: 365px; } .n3 { width: 113px; } .n4 { width: 71px; } .n5 { width: 102px; }
.calc tbody tr { height: 24px; }
.calc tbody tr:nth-child(4n) { height: 23px; }
.calc td:nth-child(3) { text-align: left; padding: 0 2px; }
.calc td:nth-child(4) { text-align: right; background: #ffffe6; }
.calc td:nth-child(5) { text-align: center; }
.calc .sum td { background: #ccffff; }
.calc .sum td:nth-child(2) { text-align: center; }
.calc input {
  appearance: none;
  display: block;
  margin: 0 auto;
  width: 16px;
  height: 16px;
  border-radius: 4px;
  background: #005fb8 url("data:image/svg+xml,%3Csvg xmlns='http://www.w3.org/2000/svg' viewBox='0 0 16 16'%3E%3Cpath d='M4 8.500l3 3 5-6' fill='none' stroke='white' stroke-width='1.200'/%3E%3C/svg%3E");
}

/* review marks drawn over the window */
.marks { position: absolute; left: 0; top: 0; pointer-events: none; }
.marks rect { fill: none; stroke: #fc3838; stroke-width: 3; }
.marks path { fill: #fc3838; }
```
